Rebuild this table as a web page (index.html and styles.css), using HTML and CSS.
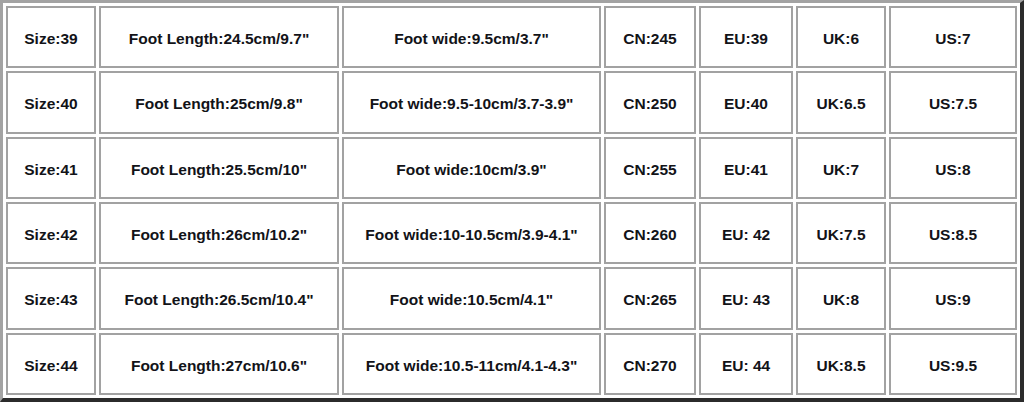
FILE: index.html
```html
<!DOCTYPE html>
<html>
<head>
<meta charset="utf-8">
<link rel="stylesheet" href="styles.css">
</head>
<body>
<table class="size-table">
  <colgroup>
    <col class="c1"><col class="c2"><col class="c3"><col class="c4"><col class="c5"><col class="c6"><col class="c7">
  </colgroup>
  <tr><td>Size:39</td><td>Foot Length:24.5cm/9.7"</td><td>Foot wide:9.5cm/3.7"</td><td>CN:245</td><td>EU:39</td><td>UK:6</td><td>US:7</td></tr>
  <tr><td>Size:40</td><td>Foot Length:25cm/9.8"</td><td>Foot wide:9.5-10cm/3.7-3.9"</td><td>CN:250</td><td>EU:40</td><td>UK:6.5</td><td>US:7.5</td></tr>
  <tr><td>Size:41</td><td>Foot Length:25.5cm/10"</td><td>Foot wide:10cm/3.9"</td><td>CN:255</td><td>EU:41</td><td>UK:7</td><td>US:8</td></tr>
  <tr><td>Size:42</td><td>Foot Length:26cm/10.2"</td><td>Foot wide:10-10.5cm/3.9-4.1"</td><td>CN:260</td><td>EU: 42</td><td>UK:7.5</td><td>US:8.5</td></tr>
  <tr><td>Size:43</td><td>Foot Length:26.5cm/10.4"</td><td>Foot wide:10.5cm/4.1"</td><td>CN:265</td><td>EU: 43</td><td>UK:8</td><td>US:9</td></tr>
  <tr><td>Size:44</td><td>Foot Length:27cm/10.6"</td><td>Foot wide:10.5-11cm/4.1-4.3"</td><td>CN:270</td><td>EU: 44</td><td>UK:8.5</td><td>US:9.5</td></tr>
</table>
</body>
</html>
```
FILE: styles.css
```css
html, body {
  margin: 0;
  padding: 0;
  background: #ffffff;
}
.size-table {
  width: 1024px;
  height: 402px;
  table-layout: fixed;
  border-collapse: separate;
  border-spacing: 3px;
  border-style: solid;
  border-width: 3px 4px 4px 3px;
  border-color: #a3a3a3 #2b2b2b #2b2b2b #a3a3a3;
  background: #ffffff;
  box-sizing: border-box;
  font-family: "Liberation Sans", Arial, sans-serif;
  font-weight: bold;
  font-size: 15.5px;
  color: #121318;
}
.size-table td {
  border: 2px solid #a2a2a2;
  text-align: center;
  vertical-align: middle;
  padding: 4px 0 0;
  white-space: nowrap;
}
.c1 { width: 90px; }
.c2 { width: 240px; }
.c3 { width: 259px; }
.c4 { width: 92px; }
.c5 { width: 94px; }
.c6 { width: 90px; }
.c7 { width: 128px; }
```
